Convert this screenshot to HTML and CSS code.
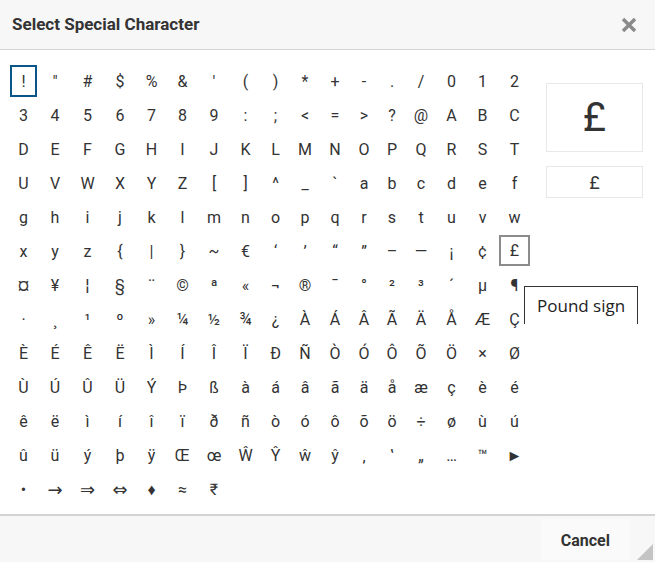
FILE: index.html
```html
<!DOCTYPE html>
<html>
<head>
<meta charset="utf-8">
<link rel="stylesheet" href="styles.css">
</head>
<body>
<div class="dialog">
  <div class="header">
    <div class="title">Select Special Character</div>
    <svg class="close" width="16" height="16" viewBox="0 0 16 16"><path d="M2 2 L14 14 M14 2 L2 14" stroke="#8a8a8a" stroke-width="3.4" stroke-linecap="butt"/></svg>
  </div>
  <div class="body">
    <div class="grid" id="grid"></div>
    <div class="side">
      <div class="preview-big">£</div>
      <div class="preview-code">£</div>
    </div>
    <div class="tooltip">Pound sign</div>
  </div>
  <div class="footer">
    <button class="cancel">Cancel</button>
    <div class="resize"></div>
  </div>
</div>
<script src="app.js"></script>
</body>
</html>
```

FILE: app.js
```js
var chars = "!\"#$%&'()*+-./012" +
"3456789:;<=>?@ABC" +
"DEFGHIJKLMNOPQRST" +
"UVWXYZ[]^_`abcdef" +
"ghijklmnopqrstuvw" +
"xyz{|}~€‘’“”–—¡¢£" +
"¤¥¦§¨©ª«¬®¯°²³´µ¶" +
"·¸¹º»¼½¾¿ÀÁÂÃÄÅÆÇ" +
"ÈÉÊËÌÍÎÏÐÑÒÓÔÕÖ×Ø" +
"ÙÚÛÜÝÞßàáâãäåæçèé" +
"êëìíîïðñòóôõö÷øùú" +
"ûüýþÿŒœŴŶŵŷ‚‛„…™►" +
"•→⇒⇔♦≈₹";
var alt = "→⇒⇔";
var grid = document.getElementById('grid');
Array.from(chars).forEach(function (c, i) {
  var d = document.createElement('div');
  d.className = 'cell';
  if (i === 0) d.className += ' selected';
  if (c === '£') d.className += ' hover';
  if (alt.indexOf(c) >= 0) d.className += ' alt';
  var s = document.createElement('span');
  s.textContent = c;
  d.appendChild(s);
  grid.appendChild(d);
});
```

FILE: styles.css
```css
* { box-sizing: border-box; }
html, body { margin: 0; padding: 0; background: #fff; }
body { font-family: Roboto, "Liberation Sans", sans-serif; color: #333; }
.dialog { width: 655px; height: 562px; display: flex; flex-direction: column; position: relative; overflow: hidden; }
.header { height: 50px; background: #f7f7f7; border-bottom: 1px solid #d6d6d6; display: flex; align-items: center; justify-content: space-between; padding: 0 18px 0 12px; flex: none; }
.title { font-size: 17px; font-weight: 700; color: #333; padding-bottom: 2px; }
.close { display: block; margin-top: 1px; }
.body { flex: 1; display: flex; padding: 14px 0 0 8px; position: relative; }
.grid { display: grid; grid-template-columns: 31px 32px 33px 32px 31px 31px 32px 31px 29px 30px 30px 28px 28px 30px 31px 31px 33px; grid-auto-rows: 34px; align-content: start; }
.cell { display: flex; align-items: center; justify-content: center; font-size: 16px; color: #333; border: 2px solid transparent; margin: 1px; }
.cell.alt { font-family: "DejaVu Sans", sans-serif; font-size: 18px; }
.cell.selected { border-color: #0b5688; margin: 1px 2px; }
.cell.hover { border-color: #8c8c8c; margin: 1px 1px 2px 1px; }
.side { margin-left: 15px; margin-top: 19px; width: 97px; display: flex; flex-direction: column; gap: 14px; }
.preview-big { height: 69px; border: 1px solid #e8e8e8; display: flex; align-items: center; justify-content: center; font-size: 40px; color: #333; }
.preview-code { height: 32px; border: 1px solid #e8e8e8; display: flex; align-items: center; justify-content: center; font-size: 18px; color: #333; }
.tooltip { position: absolute; left: 524px; top: 236px; width: 114px; height: 38px; background: #fff; border: 1px solid #333; border-bottom: none; font-family: "Open Sans", sans-serif; font-size: 17px; color: #222; padding: 7px 0 0 12px; line-height: 23px; }
.footer { height: 48px; flex: none; background: #f7f7f7; border-top: 2px solid #d3d3d3; display: flex; justify-content: flex-end; align-items: stretch; position: relative; padding: 3px 25px 2px 0; }
.cancel { font-family: Roboto, "Liberation Sans", sans-serif; font-weight: 700; font-size: 16px; color: #333; background: #fafafa; border: none; padding: 2px 20px 0; margin: 0; }
.resize { position: absolute; right: 2px; bottom: 2px; width: 0; height: 0; border-left: 16px solid transparent; border-bottom: 16px solid #c4c4c4; }
```
